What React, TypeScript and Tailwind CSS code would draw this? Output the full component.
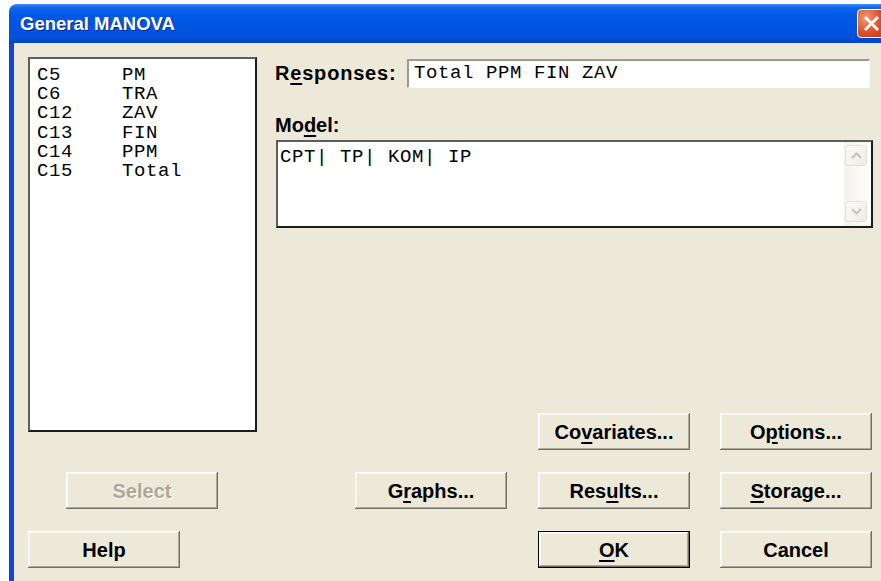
import type { ReactNode } from "react"

const sans = "font-['Liberation_Sans',Arial,sans-serif]"
const mono = "font-['Liberation_Mono','Courier_New',monospace]"

const columns = [
  ["C5", "PM"],
  ["C6", "TRA"],
  ["C12", "ZAV"],
  ["C13", "FIN"],
  ["C14", "PPM"],
  ["C15", "Total"],
]

// classic raised 3D edge used by every push button
const raised =
  "shadow-[inset_-1px_-1px_0_#716f64,inset_1px_1px_0_#ffffff,inset_-2px_-2px_0_#aca899,inset_2px_2px_0_#f7f6f0]"

function Button({
  children,
  disabled,
  isDefault,
  className = "",
}: {
  children: ReactNode
  disabled?: boolean
  isDefault?: boolean
  className?: string
}) {
  return (
    <button
      className={`w-[152px] h-[37px] shrink-0 flex items-center justify-center bg-[#ece9d8] text-[20px] font-bold ${sans} ${
        isDefault ? "border border-black" : ""
      } ${raised} ${
        disabled ? "text-[#aca899] [text-shadow:1px_1px_0_#ffffff]" : "text-black"
      } ${className}`}
    >
      {children}
    </button>
  )
}

function U({ children }: { children: ReactNode }) {
  return <span className="underline underline-offset-[3px] decoration-[2px]">{children}</span>
}

function Chevron({ up }: { up?: boolean }) {
  return (
    <svg width="11" height="7" viewBox="0 0 11 7">
      <polyline
        points={up ? "1,6 5.5,1.5 10,6" : "1,1 5.5,5.5 10,1"}
        fill="none"
        stroke="#c3c2b9"
        strokeWidth="2"
      />
    </svg>
  )
}

function ScrollButton({ up }: { up?: boolean }) {
  return (
    <div className="w-[22px] h-[21px] rounded-[3px] border border-[#e2e1da] bg-[linear-gradient(135deg,#fbfbf8,#ecebe4)] flex items-center justify-center">
      <Chevron up={up} />
    </div>
  )
}

export default function App() {
  return (
    <div className="w-[881px] h-[581px] overflow-hidden bg-white pl-[9px] pt-[4px]">
      <div className="w-[884px]">
        {/* title bar */}
        <div className="h-[39px] rounded-t-[8px] bg-[linear-gradient(to_bottom,#3d8ff5_0%,#0f64ed_10%,#0058e6_30%,#0055e3_60%,#0050da_85%,#0044c6_100%)] flex items-center pl-[11px] pr-[7px]">
          <span
            className={`flex-1 text-white text-[18.5px] font-bold ${sans} [text-shadow:1px_1px_0_#0b2a8a]`}
          >
            General MANOVA
          </span>
          <div className="w-[29px] h-[29px] rounded-[4px] border border-white bg-[radial-gradient(circle_at_30%_30%,#f09a78,#d9502a_55%,#c23c14)] flex items-center justify-center">
            <svg width="17" height="17" viewBox="0 0 17 17">
              <path d="M3 3 L14 14 M14 3 L3 14" stroke="#ffffff" strokeWidth="2.8" strokeLinecap="square" />
            </svg>
          </div>
        </div>

        {/* dialog body */}
        <div className="h-[560px] border-l-[5px] border-r-[5px] border-[#0a48d8] bg-[#ece9d8] pt-[14px]">
          <div className="flex">
            {/* variable list */}
            <div
              className={`ml-[14px] w-[229px] h-[375px] shrink-0 bg-white border-2 border-t-[#5e5e5e] border-l-[#5e5e5e] border-r-[#1c1c1c] border-b-[#1c1c1c] pl-[7px] pt-[7px] ${mono} text-[19px] tracking-[0.6px] leading-[19.2px] text-black`}
            >
              {columns.map(([c, name]) => (
                <div key={c} className="flex">
                  <span className="w-[85px]">{c}</span>
                  <span>{name}</span>
                </div>
              ))}
            </div>

            <div className="ml-[18px] w-[600px] flex flex-col">
              <div className="mt-[1px] flex items-center">
                <span className={`w-[132px] text-[20px] font-bold tracking-[0.8px] ${sans}`}>
                  R<U>e</U>sponses:
                </span>
                <div
                  className={`w-[463px] h-[29px] bg-white border-t-2 border-l-2 border-[#9d9b8f] border-b border-r border-b-white border-r-white pl-[5px] flex items-center ${mono} text-[19px] tracking-[0.6px]`}
                >
                  Total PPM FIN ZAV
                </div>
              </div>

              <div className={`mt-[22px] h-[28px] text-[20px] font-bold ${sans}`}>
                Mo<U>d</U>el:
              </div>

              <div className="mt-[2px] ml-[1px] w-[597px] h-[88px] bg-white border-2 border-t-[#5e5e5e] border-l-[#5e5e5e] border-r-[#1c1c1c] border-b-[#1c1c1c] flex">
                <div className={`flex-1 pl-[2px] pt-[5px] ${mono} text-[19px] tracking-[0.6px] leading-[20px]`}>
                  CPT| TP| KOM| IP
                </div>
                <div className="w-[27px] pl-[1px] pt-[3px] pb-[4px] flex flex-col justify-between bg-[linear-gradient(to_right,#f3f2ec,#fdfdfb)]">
                  <ScrollButton up />
                  <ScrollButton />
                </div>
              </div>

              <div className="mt-[185px] ml-[263px] flex gap-[30px]">
                <Button>
                  Co<U>v</U>ariates...
                </Button>
                <Button>
                  O<U>p</U>tions...
                </Button>
              </div>
            </div>
          </div>

          <div className="mt-[22px] flex">
            <Button disabled className="ml-[52px]">
              Select
            </Button>
            <Button className="ml-[137px]">
              G<U>r</U>aphs...
            </Button>
            <Button className="ml-[31px]">
              Res<U>u</U>lts...
            </Button>
            <Button className="ml-[30px]">
              <U>S</U>torage...
            </Button>
          </div>

          <div className="mt-[22px] flex">
            <Button className="ml-[14px]">Help</Button>
            <Button isDefault className="ml-[358px]">
              <U>O</U>K
            </Button>
            <Button className="ml-[30px]">Cancel</Button>
          </div>
        </div>
      </div>
    </div>
  )
}
